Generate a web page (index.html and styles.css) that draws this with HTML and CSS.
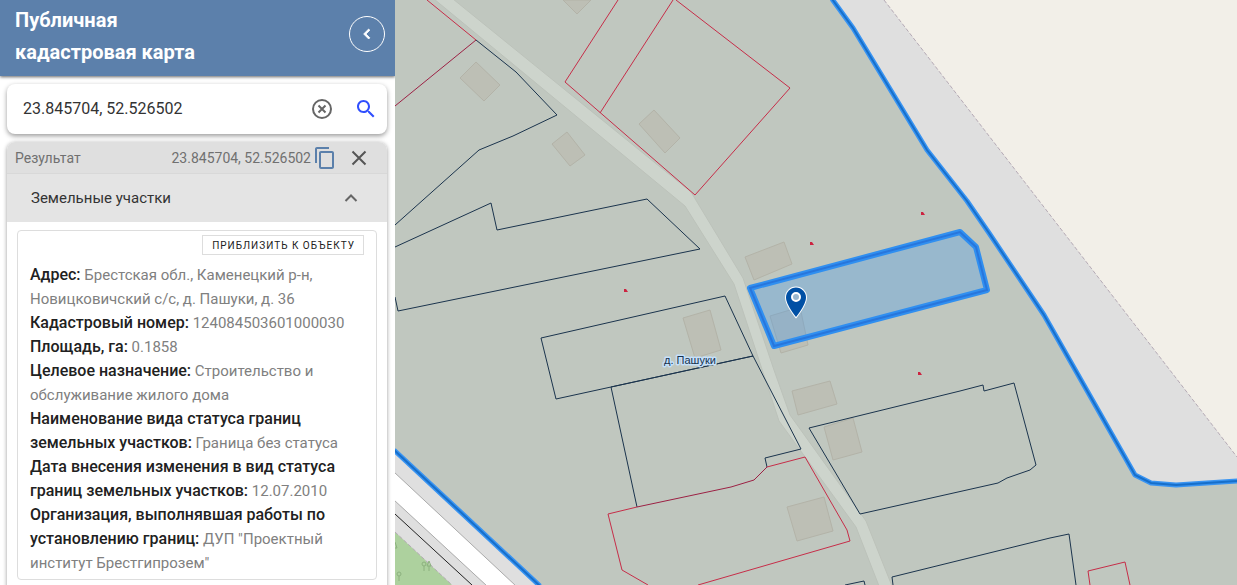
FILE: index.html
```html
<!DOCTYPE html>
<html lang="ru">
  <head>
    <meta charset="UTF-8" />
    <title>Публичная кадастровая карта</title>
    <link rel="stylesheet" href="styles.css">
  </head>
  <body>
    <aside class="sidebar">
      <header class="header">
        <h1>Публичная<br />кадастровая карта</h1>
        <button type="button" class="collapse" aria-label="Свернуть">
          <svg width="20" height="20" viewBox="0 0 24 24"><path d="M15.4 7.4L14 6l-6 6 6 6 1.4-1.4-4.6-4.6z" fill="#fff" stroke="#fff" /></svg>
        </button>
      </header>

      <form class="search">
        <input type="text" name="query" value="23.845704, 52.526502" aria-label="Поиск" />
        <button type="button" class="icon-btn" aria-label="Очистить">
          <svg width="22" height="22" viewBox="0 0 22 22" fill="none" stroke="#666">
            <circle cx="11" cy="11" r="9" stroke-width="2" />
            <path d="M7.5 7.5l7 7M14.5 7.5l-7 7" stroke-width="2" />
          </svg>
        </button>
        <button type="submit" class="icon-btn" aria-label="Найти">
          <svg width="24" height="24" viewBox="0 0 24 24"><path fill="#304ffe" d="M15.5 14h-.79l-.28-.27C15.41 12.59 16 11.11 16 9.5 16 5.91 13.09 3 9.5 3S3 5.91 3 9.5 5.91 16 9.5 16c1.61 0 3.09-.59 4.23-1.57l.27.28v.79l5 4.99L20.49 19l-4.99-5zm-6 0C7.01 14 5 11.99 5 9.5S7.01 5 9.5 5 14 7.01 14 9.5 11.99 14 9.5 14z" /></svg>
        </button>
      </form>

      <section class="result">
        <div class="result-bar">
          <span>Результат</span>
          <span class="coords">23.845704, 52.526502</span>
          <button type="button" class="icon-btn" aria-label="Копировать">
            <svg width="24" height="24" viewBox="0 0 24 24"><path fill="#5b80ab" d="M16 1H4c-1.1 0-2 .9-2 2v14h2V3h12V1zm3 4H8c-1.1 0-2 .9-2 2v14c0 1.1.9 2 2 2h11c1.1 0 2-.9 2-2V7c0-1.1-.9-2-2-2zm0 16H8V7h11v14z" /></svg>
          </button>
          <button type="button" class="icon-btn close" aria-label="Закрыть">
            <svg width="24" height="24" viewBox="0 0 24 24"><path d="M5.5 5.5l13 13M18.5 5.5l-13 13" stroke="#555" stroke-width="2" /></svg>
          </button>
        </div>

        <button type="button" class="group-toggle" aria-expanded="true">
          <span>Земельные участки</span>
          <svg width="24" height="24" viewBox="0 0 24 24"><path d="M6.5 15l5.5-5.500 5.500 5.500" fill="none" stroke="#666" stroke-width="2" /></svg>
        </button>

        <div class="group-body">
          <article class="card">
            <button type="button" class="zoom-to">Приблизить к объекту</button>
            <p><b>Адрес:</b> Брестская обл., Каменецкий р-н, Новицковичский с/с, д. Пашуки, д. 36</p>
            <p><b>Кадастровый номер:</b> 124084503601000030</p>
            <p><b>Площадь, га:</b> 0.1858</p>
            <p><b>Целевое назначение:</b> Строительство и обслуживание жилого дома</p>
            <p><b>Наименование вида статуса границ земельных участков:</b> Граница без статуса</p>
            <p><b>Дата внесения изменения в вид статуса границ земельных участков:</b> 12.07.2010</p>
            <p><b>Организация, выполнявшая работы по установлению границ:</b> ДУП "Проектный институт Брестгипрозем"</p>
          </article>
        </div>
      </section>
    </aside>

    <main class="map">
      <svg viewBox="395 0 842 585" preserveAspectRatio="xMinYMin slice">
        <!-- Land -->
        <rect class="village" x="395" y="0" width="842" height="585" />
        <path class="outside" d="M832 0L853 28 927 150 967 201 989 233 1044 315 1135 475 1151 483 1176 485 1237 481V0z" />
        <path class="field" d="M884 0L1237 457V0z" />
        <path class="field-edge" d="M884 0L1237 457" />
        <path class="outside" d="M395 451L539 585H395z" />
        <path class="highway" d="M394 472L516 586H487L394 500z" />
        <path class="forest" d="M395 532L452 585H395z" />
        <path class="forest-edge" d="M395 532L452 585" />
        <path class="rail" d="M395 514L472 585" />
        <g class="trees">
          <circle cx="424" cy="564" r="2" />
          <path d="M424 566v5M429 561l-2 5h4zM429 566v5" />
          <circle cx="399" cy="574" r="2" />
          <path d="M399 576v5M395 542l2 6h-2" />
        </g>

        <!-- Road -->
        <path class="road" d="M434 -1L453 -1 691 192 743 278 774 370 790 415 866 521 892 586H879L856 527 779 421 734 284 685 206z" />

        <!-- Buildings -->
        <g class="building">
          <path d="M563 0L577 14 591 0z" />
          <path d="M476 62L500 85 484 101 460 78z" />
          <path d="M567 132L585 155 570 166 552 144z" />
          <path d="M654 110L680 138 665 153 639 124z" />
          <path d="M745 257L784 242 792 264 754 280z" />
          <path d="M683 318L710 310 721 350 695 358z" />
          <path d="M770 316L800 307 808 345 781 353z" />
          <path d="M792 391L830 381 837 404 798 415z" />
          <path d="M824 427L853 418 862 452 833 460z" />
          <path d="M787 507L824 497 833 531 797 541z" />
        </g>

        <!-- Parcels -->
        <g class="parcel">
          <path d="M476 40L516 72 557 115 513 136 479 150 395 225" />
          <path d="M395 247L491 203 497 230 647 199 700 249 398 311 395 297" />
          <path d="M753 356L725 296 541 338 556 399 753 356 801 449 765 458 767 467" />
          <path d="M753 356L611 387 637 507" />
          <path d="M809 428L960 391 983 385 984 391 1014 383 1036 465 1030 470 1007 478 998 483 860 514z" />
          <path d="M893 585L892 577 1050 538 1069 534 1076 585" />
          <path d="M845 585L864 581 865 585" />
        </g>
        <g class="parcel-red">
          <path d="M427 0L476 40" />
          <path d="M618 0L565 82 695 195 790 88 676 0" />
          <path d="M673 0L600 113" />
          <path d="M637 507L608 514 622 570 648 585" />
          <path d="M767 467L805 457 847 530 850 541 698 585" />
          <path d="M1090 585L1088 571 1125 562 1130 585" />
        </g>
        <g class="parcel-shared">
          <path d="M476 40L395 106" />
          <path d="M637 507L731 487 754 480 767 467" />
        </g>
        <path class="poles" d="M624 289h2l2 3h-4zM810 242h2l2 3h-4zM921 212h2l2 3h-4zM918 372h2l2 3h-4z" />

        <!-- Village boundary -->
        <path class="boundary" d="M832 -1L853 28 927 150 967 201 989 233 1044 315 1135 475 1151 483 1176 485 1238 481M394 450L540 586" />
        <path class="boundary-core" d="M832 -1L853 28 927 150 967 201 989 233 1044 315 1135 475 1151 483 1176 485 1238 481M394 450L540 586" />

        <text class="place" x="664" y="364">д. Пашуки</text>

        <!-- Selected parcel -->
        <path class="selected" d="M750 288L960 232 976 247 987 290 774 346z" />
        <path class="selected-core" d="M750 288L960 232 976 247 987 290 774 346z" />
        <path class="pin" d="M796 287.500c-5.500 0-10 4.500-10 10 0 7.500 10 19.500 10 19.500s10-12 10-19.500c0-5.500-4.500-10-10-10z" />
        <circle class="pin-hole" cx="796" cy="297" r="4" />
      </svg>
    </main>
  </body>
</html>
```
FILE: styles.css
```css
* {
  box-sizing: border-box;
}
body {
  margin: 0;
  height: 100vh;
  display: flex;
  overflow: hidden;
  font-family: Roboto, "Liberation Sans", sans-serif;
  color: #212121;
}
button {
  font: inherit;
  color: inherit;
  background: none;
  border: 0;
  padding: 0;
  cursor: pointer;
}
svg {
  display: block;
}

/* Sidebar */
.sidebar {
  flex: 0 0 395px;
  background: #fff;
  overflow: hidden;
}
.header {
  display: flex;
  justify-content: space-between;
  align-items: flex-start;
  padding: 4px 10px 8px 15px;
  background: #5c80ab;
  box-shadow: 0 1px 3px rgba(0, 0, 0, 0.6);
}
h1 {
  margin: 0;
  font-size: 20px;
  line-height: 32px;
  color: #fff;
}
.collapse {
  display: flex;
  align-items: center;
  justify-content: center;
  width: 36px;
  height: 36px;
  margin-top: 12px;
  border: 1px solid #fff;
  border-radius: 50%;
}
.search {
  display: flex;
  align-items: center;
  gap: 21px;
  height: 50px;
  margin: 8px 8px 8px 7px;
  padding: 0 9px 0 16px;
  border-radius: 8px;
  box-shadow: 0 2px 5px rgba(0, 0, 0, 0.4);
}
.search input {
  flex: 1;
  min-width: 0;
  padding: 0 0 2px;
  border: 0;
  outline: 0;
  font: 16px Roboto, "Liberation Sans", sans-serif;
  color: #333;
}
.result {
  margin: 0 8px 0 7px;
  border-radius: 8px 8px 0 0;
  box-shadow: 0 1px 4px rgba(0, 0, 0, 0.4);
}
.result-bar {
  display: flex;
  align-items: center;
  height: 32px;
  padding: 0 16px 0 8px;
  border-radius: 8px 8px 0 0;
  background: #dfdfdf;
  border-bottom: 1px solid #d8d8d8;
  font-size: 14px;
  color: #707070;
}
.coords {
  margin-left: auto;
  margin-right: 2px;
}
.close {
  margin-left: 10px;
}
.group-toggle {
  display: flex;
  align-items: center;
  justify-content: space-between;
  width: 100%;
  height: 48px;
  padding: 0 24px;
  background: #e4e4e4;
  font-size: 15px;
  color: #333;
}
.group-body {
  padding: 8px 10px 16px;
}
.card {
  display: flow-root;
  padding: 4px 12px;
  border: 1px solid #ddd;
  border-radius: 4px;
  font-size: 15px;
  line-height: 24px;
  color: #808080;
}
.card p {
  margin: 0;
}
.card b {
  font-size: 16px;
  font-weight: 500;
  color: #212121;
}
.zoom-to {
  display: block;
  height: 20px;
  margin: 0 0 8px auto;
  padding: 1px 8px 0 9px;
  border: 1px solid #ddd;
  font-size: 10px;
  font-weight: 400;
  line-height: 17px;
  letter-spacing: 1px;
  text-transform: uppercase;
  color: #212121;
}

/* Map */
.map {
  flex: 1;
  min-width: 0;
  background: #c0c7bf;
}
.map svg {
  width: 100%;
  height: 100%;
}
.village { fill: #c0c7bf; }
.outside { fill: #dfdfdf; }
.field { fill: #f2efe8; }
.forest { fill: #add19e; }
.field-edge,
.forest-edge {
  fill: none;
  stroke: #b5aab5;
  stroke-dasharray: 4 2;
}
.highway {
  fill: #fff;
  stroke: #aaa;
}
.rail { stroke: #222; }
.trees {
  fill: none;
  stroke: #8cb17e;
}
.road {
  fill: #cdd4cc;
  stroke: #bcc2ba;
}
.building {
  fill: #bdbfb5;
  stroke: #b3b3a8;
}
.parcel {
  fill: none;
  stroke: #1b344d;
}
.parcel-red {
  fill: none;
  stroke: #c62d48;
}
.parcel-shared {
  fill: none;
  stroke: #9c2144;
}
.poles { fill: #cc2340; }
.boundary {
  fill: none;
  stroke: #3994f2;
  stroke-width: 5;
  stroke-linejoin: round;
}
.boundary-core {
  fill: none;
  stroke: #176fca;
  stroke-width: 2;
}
.place {
  font: 11px "Liberation Sans", sans-serif;
  fill: #17324d;
  stroke: #c5e0fa;
  stroke-width: 3;
  stroke-linejoin: round;
  paint-order: stroke;
}
.selected {
  fill: rgba(60, 150, 240, 0.3);
  stroke: #308ff0;
  stroke-width: 6;
  stroke-linejoin: round;
}
.selected-core {
  fill: none;
  stroke: #2876dc;
  stroke-width: 2;
}
.pin {
  fill: #0050a5;
  stroke: #fff;
  stroke-width: 2;
  paint-order: stroke;
}
.pin-hole {
  fill: #9ab7cf;
  stroke: #fff;
  stroke-width: 2;
}
```
